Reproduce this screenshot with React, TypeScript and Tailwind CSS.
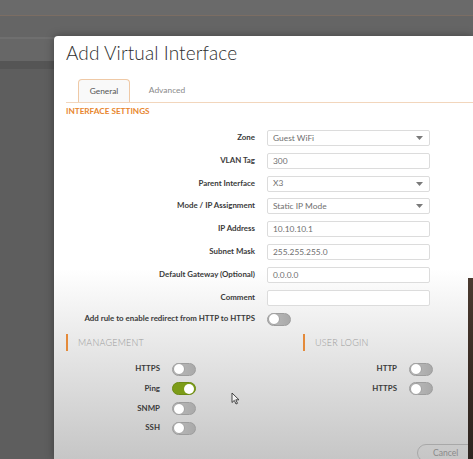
import React from "react";

const font = { fontFamily: "Lato, 'Open Sans', 'Liberation Sans', sans-serif" };

function Caret() {
  return (
    <svg width="7" height="4" viewBox="0 0 7 4" className="shrink-0">
      <path d="M0 0 L7 0 L3.5 4 Z" fill="#7a7a7a" />
    </svg>
  );
}

function Field({ label, value, select }: { label: string; value?: string; select?: boolean }) {
  return (
    <div className="flex items-center h-[16px]">
      <div className="w-[201px] text-right text-[7.9px] font-bold text-[#3a3a3a] leading-none whitespace-nowrap">{label}</div>
      <div className="ml-[12px] w-[163px] h-[16px] border border-[#dcdcdc] rounded-[2px] bg-white flex items-center justify-between pl-[5px] pr-[6px] text-[8.4px] text-[#6f6f6f] leading-none">
        <span>{value}</span>
        {select && <Caret />}
      </div>
    </div>
  );
}

function Toggle({ on }: { on?: boolean }) {
  if (on) {
    return (
      <div className="w-[24px] h-[13px] rounded-full bg-[#7c9c18] border border-[#6c8a14] flex items-center justify-end pr-[1px] shrink-0">
        <div className="w-[10px] h-[10px] rounded-full bg-white" />
      </div>
    );
  }
  return (
    <div className="w-[24px] h-[13px] rounded-full bg-gradient-to-r from-[#bcbcbc] to-[#a9a9a9] border border-[#9d9d9d] flex items-center shrink-0">
      <div className="w-[12px] h-[12px] rounded-full bg-white border border-[#a0a0a0]" />
    </div>
  );
}

function ToggleRow({ label, on }: { label: string; on?: boolean }) {
  return (
    <div className="flex items-center h-[19.7px]">
      <div className="w-[94px] text-right text-[7.9px] font-bold text-[#3a3a3a] leading-none">{label}</div>
      <div className="ml-[12px]">
        <Toggle on={on} />
      </div>
    </div>
  );
}

function SectionHead({ title }: { title: string }) {
  return (
    <div className="flex items-center h-[17px]">
      <div className="w-[2px] h-[17px] bg-[#e48a3a]" />
      <div className="ml-[10px] text-[9px] text-[#9a9a9a] font-light tracking-[0.2px] leading-none">{title}</div>
    </div>
  );
}

export default function App() {
  return (
    <div className="relative w-[473px] h-[459px] overflow-hidden bg-[#5f5f5f]" style={font}>
      {/* background bands */}
      <div className="flex flex-col">
        <div className="h-[15px] bg-[#6a6a6a]" />
        <div className="h-[1px] bg-[#7b6d63]" />
        <div className="h-[21px] bg-[#656565]" />
        <div className="h-[2px] bg-[#6f6f6f]" />
        <div className="h-[22px] bg-[#676767]" />
        <div className="h-[8px] bg-[#555555]" />
        <div className="h-[390px] bg-[#5e5e5e]" />
      </div>

      {/* dialog */}
      <div className="absolute left-[54px] top-[36px] w-[419px] h-[423px] rounded-tl-[4px] bg-gradient-to-b from-white via-white via-55% to-[#c6c6c6] shadow-[0_0_8px_rgba(0,0,0,0.35)] flex flex-col">
        <div className="pl-[12px] pt-[3px] text-[19px] leading-[28px] font-light text-[#2e2e2e] tracking-[0.1px]">
          Add Virtual Interface
        </div>

        <div className="ml-[12px] mt-[12px] flex items-end border-b border-[#f2d6bc] h-[24px]">
          <div className="ml-[12px] w-[52px] h-[23px] rounded-t-[4px] border border-b-0 border-[#efc9a6] bg-[#f9f9f9] flex items-center justify-center text-[8.4px] text-[#555]">
            General
          </div>
          <div className="w-[74px] h-[23px] flex items-center justify-center text-[8.4px] text-[#8a8a8a]">
            Advanced
          </div>
        </div>

        <div className="ml-[12px] mt-[3px] text-[8.2px] font-bold text-[#e8862e] leading-[10px]">
          INTERFACE SETTINGS
        </div>

        <div className="mt-[14px] flex flex-col gap-[6.8px]">
          <Field label="Zone" value="Guest WiFi" select />
          <Field label="VLAN Tag" value="300" />
          <Field label="Parent Interface" value="X3" select />
          <Field label="Mode / IP Assignment" value="Static IP Mode" select />
          <Field label="IP Address" value="10.10.10.1" />
          <Field label="Subnet Mask" value="255.255.255.0" />
          <Field label="Default Gateway (Optional)" value="0.0.0.0" />
          <Field label="Comment" />
          <div className="flex items-center h-[16px] -mt-[1px]">
            <div className="w-[201px] text-right text-[7.9px] font-bold text-[#3a3a3a] leading-none whitespace-nowrap">
              Add rule to enable redirect from HTTP to HTTPS
            </div>
            <div className="ml-[12px]">
              <Toggle />
            </div>
          </div>
        </div>

        <div className="ml-[12px] mt-[7px] grid grid-cols-[237px_1fr]">
          <div className="flex flex-col">
            <SectionHead title="MANAGEMENT" />
            <div className="mt-[8px] flex flex-col">
              <ToggleRow label="HTTPS" />
              <ToggleRow label="Ping" on />
              <ToggleRow label="SNMP" />
              <ToggleRow label="SSH" />
            </div>
          </div>
          <div className="flex flex-col">
            <SectionHead title="USER LOGIN" />
            <div className="mt-[8px] flex flex-col">
              <ToggleRow label="HTTP" />
              <ToggleRow label="HTTPS" />
            </div>
          </div>
        </div>

        <div className="mt-[6px] ml-[363px]">
          <div className="w-[62px] h-[18px] rounded-full border border-[#a8a8a8] flex items-center pl-[15px] text-[8.6px] text-[#8a8a8a]">
            Cancel
          </div>
        </div>
      </div>

      {/* photo strip on right edge */}
      <div className="absolute right-0 top-[278px] w-[5px] h-[181px] bg-gradient-to-b from-[#4a3a30] via-[#3a2c24] to-[#2e2520]" />

      {/* mouse cursor */}
      <svg className="absolute left-[231px] top-[392px]" width="9" height="13" viewBox="0 0 9 13">
        <path d="M1 1 L1 10.5 L3.3 8.4 L5 12 L6.5 11.3 L4.8 7.8 L8 7.8 Z" fill="#f4f4f4" stroke="#333" strokeWidth="0.9" strokeLinejoin="round" />
      </svg>
    </div>
  );
}
